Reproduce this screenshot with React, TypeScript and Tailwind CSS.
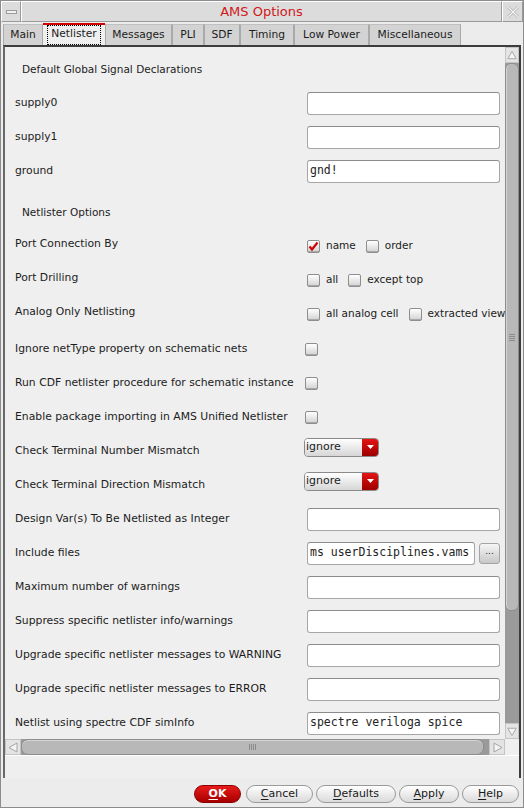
import React from 'react';

const tabs = [
  { name: 'Main', w: 'w-[40px]' },
  { name: 'Netlister', w: 'w-[62px]', active: true },
  { name: 'Messages', w: 'w-[67px]' },
  { name: 'PLI', w: 'w-[32px]' },
  { name: 'SDF', w: 'w-[36px]' },
  { name: 'Timing', w: 'w-[54px]' },
  { name: 'Low Power', w: 'w-[75px]' },
  { name: 'Miscellaneous', w: 'w-[92px]' },
];

function Check({ checked }: { checked?: boolean }) {
  return (
    <span className="flex h-[13px] w-[13px] shrink-0 items-center justify-center rounded-[2px] border border-[#8e8e8e] bg-linear-to-b from-white to-[#d2d2d2] shadow-[inset_0_-1px_0_#a8a8a8]">
      {checked && (
        <svg width="11" height="11" viewBox="0 0 11 11">
          <path d="M1.5 5.5 L4 8.5 L9.5 1.5" stroke="#d00000" strokeWidth="2.2" fill="none" />
        </svg>
      )}
    </span>
  );
}

function Checks({ items }: { items: { label: string; checked?: boolean }[] }) {
  return (
    <div className="mt-[4px] flex shrink-0 items-center gap-[10px] whitespace-nowrap text-[10.5px]">
      {items.map((it) => (
        <div key={it.label} className="flex shrink-0 items-center">
          <Check checked={it.checked} />
          <span className="ml-[6px]">{it.label}</span>
        </div>
      ))}
    </div>
  );
}

function Input({ value, wide = true }: { value?: string; wide?: boolean }) {
  return (
    <div
      className={`flex h-[23px] shrink-0 items-center overflow-hidden rounded-[3px] border border-[#a6a6a6] border-t-[#8c8c8c] bg-white pl-[2px] font-['DejaVu_Sans_Mono',monospace] text-[11.5px] whitespace-nowrap text-[#222] ${
        wide ? 'w-[193px]' : 'w-[168px]'
      }`}
    >
      {value}
    </div>
  );
}

function Dropdown() {
  return (
    <div className="mb-[8px] ml-[-3px] flex h-[19px] w-[75px] overflow-hidden rounded-[4px] border border-[#8a8a8a]">
      <div className="flex flex-1 items-center bg-linear-to-b from-white to-[#d6d6d6] pl-[1px] text-[11px]">ignore</div>
      <div className="flex w-[16px] items-center justify-center bg-linear-to-b from-[#e41414] to-[#9c0000]">
        <svg width="7" height="4" viewBox="0 0 7 4">
          <path d="M0 0 H7 L3.5 4 Z" fill="white" />
        </svg>
      </div>
    </div>
  );
}

function Row({ label, children, extra = '' }: { label: string; children?: React.ReactNode; extra?: string }) {
  return (
    <div className={`flex h-[34px] shrink-0 items-center ${extra}`}>
      <div className="w-[302px] shrink-0 pl-[10px] text-[10.8px] whitespace-nowrap">{label}</div>
      {children}
    </div>
  );
}

function Arrow({ dir }: { dir: 'up' | 'down' | 'left' | 'right' }) {
  const d = {
    up: 'M2 10 L6.5 2 L11 10 Z',
    down: 'M2 3 L6.5 11 L11 3 Z',
    left: 'M10 2 L2 6.5 L10 11 Z',
    right: 'M3 2 L11 6.5 L3 11 Z',
  }[dir];
  return (
    <svg width="13" height="13" viewBox="0 0 13 13">
      <path d={d} fill="#f4f4f4" stroke="#a4a4a4" strokeWidth="1" />
    </svg>
  );
}

function Btn({ u, rest, w, primary }: { u: string; rest: string; w: string; primary?: boolean }) {
  return (
    <div
      className={`flex h-[18px] items-center justify-center rounded-full border text-[11px] ${w} ${
        primary
          ? 'border-[#8a0000] bg-linear-to-b from-[#e81a1a] to-[#a80000] font-bold text-white'
          : 'border-[#9a9a9a] bg-linear-to-b from-white to-[#dadada] text-[#1a1a1a]'
      }`}
    >
      <span className="underline underline-offset-2">{u}</span>
      {rest}
    </div>
  );
}

export default function App() {
  return (
    <div className="flex h-[808px] w-[524px] flex-col border border-[#8c8c8c] bg-[#ececec] font-['DejaVu_Sans',sans-serif] text-[10.5px] text-[#1c1c1c]">
      {/* title bar */}
      <div className="flex h-[21px] shrink-0 bg-[#dcdcdc]">
        <div className="flex w-[20px] items-center justify-center border border-t-white border-l-white border-r-[#9a9a9a] border-b-[#9a9a9a]">
          <span className="h-[4px] w-[11px] border border-[#9a9a9a] bg-[#f2f2f2]" />
        </div>
        <div className="flex flex-1 items-center justify-center border border-t-white border-l-white border-r-[#9a9a9a] border-b-[#9a9a9a] text-[13px] text-[#d01818]">
          AMS Options
        </div>
        <div className="flex w-[21px] items-center justify-center border border-t-white border-l-white border-r-[#9a9a9a] border-b-[#9a9a9a]">
          <svg width="14" height="14" viewBox="0 0 14 14">
            <path d="M2 2 L12 12 M12 2 L2 12" stroke="#b8b8b8" strokeWidth="3" />
            <path d="M2 2 L12 12 M12 2 L2 12" stroke="#f4f4f4" strokeWidth="1.2" />
          </svg>
        </div>
      </div>

      {/* tabs */}
      <div className="flex h-[23px] shrink-0 items-end pl-[2px]">
        {tabs.map((t) =>
          t.active ? (
            <div
              key={t.name}
              className={`flex h-[22px] items-center justify-center border-t-2 border-[#d00000] bg-[#efefef] ${t.w}`}
            >
              <span className="border border-dotted border-black px-[3px] pb-[1px] text-[10.7px]">{t.name}</span>
            </div>
          ) : (
            <div
              key={t.name}
              className={`flex h-[21px] items-center justify-center border border-b-0 border-[#a9a9a9] border-t-[#c0c0c0] bg-[#d3d3d3] text-[10.7px] ${t.w}`}
            >
              {t.name}
            </div>
          ),
        )}
      </div>

      {/* panel */}
      <div className="mx-[2px] flex h-[733px] shrink-0 flex-col border-x-2 border-t-2 border-[#3c3c3c] border-l-[#6a6a6a] bg-[#efefef]">
        <div className="flex h-[692px]">
          <div className="flex w-[500px] flex-col overflow-hidden">
            <div className="flex h-[39px] shrink-0 items-center pt-[6px] pl-[17px]">Default Global Signal Declarations</div>
            <Row label="supply0">
              <Input />
            </Row>
            <Row label="supply1">
              <Input />
            </Row>
            <Row label="ground">
              <Input value="gnd!" />
            </Row>
            <div className="flex h-[39px] shrink-0 items-center pt-[11px] pl-[17px]">Netlister Options</div>
            <Row label="Port Connection By">
              <Checks items={[{ label: 'name', checked: true }, { label: 'order' }]} />
            </Row>
            <Row label="Port Drilling">
              <Checks items={[{ label: 'all' }, { label: 'except top' }]} />
            </Row>
            <Row label="Analog Only Netlisting">
              <Checks items={[{ label: 'all analog cell' }, { label: 'extracted view' }]} />
            </Row>
            <Row label="Ignore netType property on schematic nets" extra="mt-[3px]">
              <div className="ml-[-2px]">
                <Check />
              </div>
            </Row>
            <Row label="Run CDF netlister procedure for schematic instance">
              <div className="ml-[-2px]">
                <Check />
              </div>
            </Row>
            <Row label="Enable package importing in AMS Unified Netlister">
              <div className="ml-[-2px]">
                <Check />
              </div>
            </Row>
            <Row label="Check Terminal Number Mismatch">
              <Dropdown />
            </Row>
            <Row label="Check Terminal Direction Mismatch">
              <Dropdown />
            </Row>
            <Row label="Design Var(s) To Be Netlisted as Integer">
              <Input />
            </Row>
            <Row label="Include files">
              <Input value="ms userDisciplines.vams" wide={false} />
              <div className="ml-[4px] flex h-[21px] w-[21px] items-center justify-center rounded-[3px] border border-[#a4a4a4] bg-linear-to-b from-[#f6f6f6] to-[#c8c8c8] pb-[3px] text-[9px]">
                ...
              </div>
            </Row>
            <Row label="Maximum number of warnings">
              <Input />
            </Row>
            <Row label="Suppress specific netlister info/warnings">
              <Input />
            </Row>
            <Row label="Upgrade specific netlister messages to WARNING">
              <Input />
            </Row>
            <Row label="Upgrade specific netlister messages to ERROR">
              <Input />
            </Row>
            <Row label="Netlist using spectre CDF simInfo">
              <Input value="spectre veriloga spice" />
            </Row>
          </div>

          {/* vertical scrollbar */}
          <div className="flex w-[14px] flex-col bg-[#9a9a9a]">
            <div className="flex h-[16px] shrink-0 items-center justify-center border border-[#c4c4c4] bg-[#e4e4e4]">
              <Arrow dir="up" />
            </div>
            <div className="flex h-[548px] shrink-0 items-center justify-center rounded-[6px] border border-[#8c8c8c] bg-[#b8b8b8] shadow-[inset_1px_0_0_#d4d4d4]">
              <div className="flex flex-col gap-[1px]">
                <span className="h-px w-[6px] bg-[#8a8a8a]" />
                <span className="h-px w-[6px] bg-[#8a8a8a]" />
                <span className="h-px w-[6px] bg-[#8a8a8a]" />
                <span className="h-px w-[6px] bg-[#8a8a8a]" />
              </div>
            </div>
            <div className="flex-1" />
            <div className="flex h-[16px] shrink-0 items-center justify-center border border-[#c4c4c4] bg-[#e4e4e4]">
              <Arrow dir="down" />
            </div>
          </div>
        </div>

        {/* horizontal scrollbar */}
        <div className="flex h-[16px] shrink-0">
          <div className="flex w-[500px] bg-[#9a9a9a]">
            <div className="flex w-[16px] shrink-0 items-center justify-center border border-[#c4c4c4] bg-[#e4e4e4]">
              <Arrow dir="left" />
            </div>
            <div className="flex w-[463px] shrink-0 items-center justify-center rounded-[7px] border border-[#8c8c8c] bg-[#b8b8b8] shadow-[inset_0_1px_0_#d4d4d4]">
              <div className="flex gap-[1px]">
                <span className="h-[6px] w-px bg-[#8a8a8a]" />
                <span className="h-[6px] w-px bg-[#8a8a8a]" />
                <span className="h-[6px] w-px bg-[#8a8a8a]" />
                <span className="h-[6px] w-px bg-[#8a8a8a]" />
              </div>
            </div>
            <div className="flex-1" />
            <div className="flex w-[16px] shrink-0 items-center justify-center border border-[#c4c4c4] bg-[#e4e4e4]">
              <Arrow dir="right" />
            </div>
          </div>
          <div className="w-[14px] bg-[#efefef]" />
        </div>
        <div className="flex-1 border-t border-white bg-[#efefef]" />
      </div>

      {/* buttons */}
      <div className="flex flex-1 items-start justify-end gap-[3px] pt-[7px] pr-[4px]">
        <div className="mr-[2px]">
          <Btn u="O" rest="K" w="w-[47px]" primary />
        </div>
        <Btn u="C" rest="ancel" w="w-[67px]" />
        <Btn u="D" rest="efaults" w="w-[80px]" />
        <Btn u="A" rest="pply" w="w-[60px]" />
        <Btn u="H" rest="elp" w="w-[57px]" />
      </div>
    </div>
  );
}
